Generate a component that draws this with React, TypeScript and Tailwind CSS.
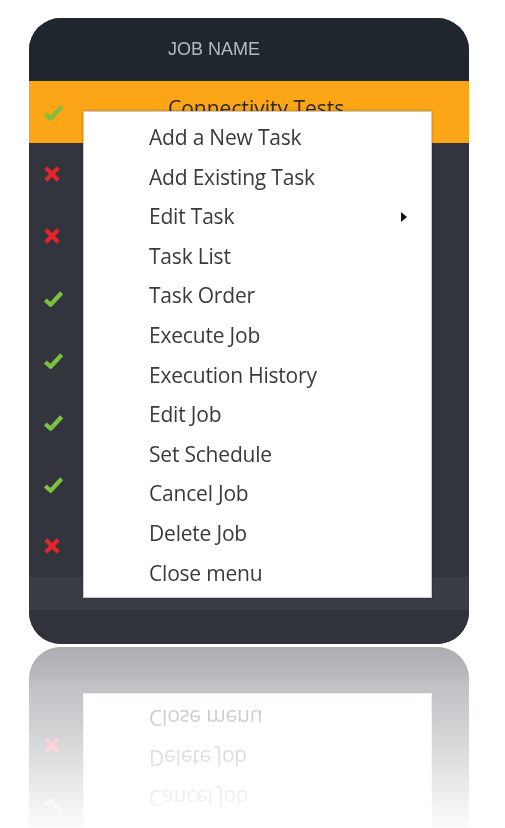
import React from "react";

const Check = () => (
  <svg width="23" height="23" viewBox="0 0 24 24">
    <path d="M3.5 13.5 L9 18.5 L20.5 6" fill="none" stroke="#7cc23f" strokeWidth="4.4" strokeLinejoin="round" />
  </svg>
);

const Cross = () => (
  <svg width="20" height="20" viewBox="0 0 24 24">
    <path d="M4.5 4.5 L19.5 19.5 M19.5 4.5 L4.5 19.5" fill="none" stroke="#e8232a" strokeWidth="5" />
  </svg>
);

// only the selected row's name peeks out from under the menu
const jobs = [
  { ok: true, name: "Connectivity Tests" },
  { ok: false, name: "" },
  { ok: false, name: "" },
  { ok: true, name: "" },
  { ok: true, name: "" },
  { ok: true, name: "" },
  { ok: true, name: "" },
  { ok: false, name: "" },
];

const menuItems = [
  "Add a New Task",
  "Add Existing Task",
  "Edit Task",
  "Task List",
  "Task Order",
  "Execute Job",
  "Execution History",
  "Edit Job",
  "Set Schedule",
  "Cancel Job",
  "Delete Job",
  "Close menu",
];

const JobMenu = () => (
  <div className="absolute left-[54px] top-[93px] w-[349px] bg-white border border-[#c9cacc] pt-[6px] pb-[4px] shadow-[0_0_3px_rgba(0,0,0,0.25)]">
    {menuItems.map((item) => (
      <div
        key={item}
        className="h-[39.6px] flex items-center pl-[65px] pr-[24px] text-[21px] tracking-[-0.2px] text-[#3a3a3c] font-['Open_Sans',sans-serif]"
      >
        <span className="flex-1">{item}</span>
        {item === "Edit Task" && (
          <span className="w-0 h-0 border-y-[5px] border-y-transparent border-l-[6px] border-l-[#111]" />
        )}
      </div>
    ))}
  </div>
);

export default function App() {
  return (
    <div className="min-h-screen bg-white pt-[18px] pl-[29px]">
      <div className="relative w-[440px] rounded-[32px] bg-[#31343c] [-webkit-box-reflect:below_3px_linear-gradient(transparent_70%,rgba(0,0,0,0.4))]">
        <div className="h-[63px] rounded-t-[32px] bg-[#20262d] flex items-center pl-[139px] text-[18px] text-[#b3b9c0] font-['Liberation_Sans',sans-serif]">
          JOB NAME
        </div>
        {jobs.map((job, i) => (
          <div
            key={i}
            className={
              i === 0
                ? "h-[62px] flex items-center bg-[#fca516]"
                : "h-[62px] flex items-center bg-[#32353e]"
            }
          >
            <div className="w-[139px] pl-[13px] flex items-center">
              {job.ok ? <Check /> : <Cross />}
            </div>
            {job.name && (
              <span className="text-[21px] text-[#2b2b2b] font-['Open_Sans',sans-serif] -mt-[6px]">
                {job.name}
              </span>
            )}
          </div>
        ))}
        <div className="h-[33px] bg-[#3a3d46]" />
        <div className="h-[34px] rounded-b-[32px] bg-[#30333b]" />
        <JobMenu />
      </div>
    </div>
  );
}
